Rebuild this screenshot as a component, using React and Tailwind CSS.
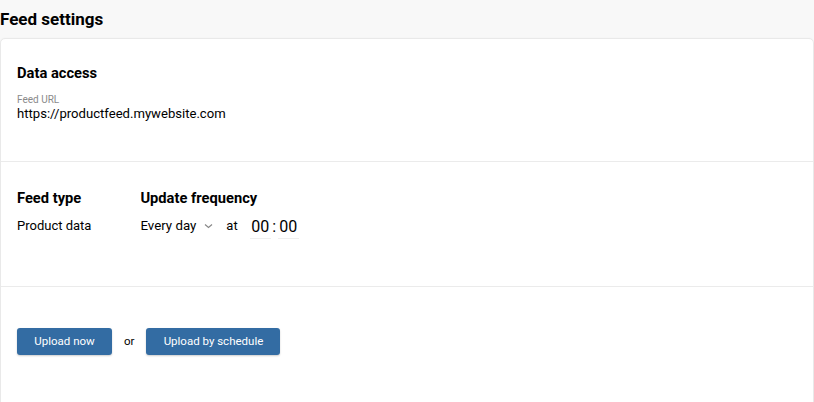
import React from 'react';

export default function App() {
  return (
    <div className="w-[814px] h-[402px] overflow-hidden bg-[#f8f8f8] font-['Roboto',sans-serif] text-[#1a1a1a]">
      {/* Page title */}
      <div className="h-[38px] flex items-center">
        <h1 className="text-[17px] font-bold leading-none text-black">Feed settings</h1>
      </div>

      {/* Settings card */}
      <div className="w-[814px] bg-white border border-[#e9e9e9] rounded-t-[5px] shadow-[0_0_2px_rgba(0,0,0,0.04)]">
        {/* Data access */}
        <div className="h-[123px] px-4 pt-[24px] border-b border-[#ebebeb]">
          <h2 className="text-[14.7px] font-bold leading-[20px] text-black">Data access</h2>
          <div className="mt-[11px] text-[10px] leading-[12px] text-[#8a8a8a]">Feed URL</div>
          <div className="text-[13.1px] leading-[16px] text-black">https://productfeed.mywebsite.com</div>
        </div>

        {/* Feed type + frequency */}
        <div className="h-[125px] px-4 pt-[26px] border-b border-[#ebebeb] flex gap-[49px]">
          <div>
            <h2 className="text-[14.7px] font-bold leading-[20px] text-black">Feed type</h2>
            <div className="mt-[10px] text-[13px] leading-[16px] text-black">Product data</div>
          </div>
          <div>
            <h2 className="text-[14.7px] font-bold leading-[20px] text-black">Update frequency</h2>
            <div className="mt-[10px] flex items-center h-[16px] text-[13px] leading-[16px] text-black">
              <span className="text-[13.3px]">Every day</span>
              <svg className="ml-[8px]" width="9" height="6" viewBox="0 0 9 6" fill="none">
                <path d="M1 1.5 L4.5 4.5 L8 1.5" stroke="#888" strokeWidth="1.2" />
              </svg>
              <span className="ml-[13px]">at</span>
              <span className="ml-[12px] flex items-center text-[16px] leading-[20px] mt-[3px]">
                <span className="w-[21px] text-center border-b border-[#eeeeee] pb-[1px]">00</span>
                <span className="w-[7px] text-center pb-[1px]">:</span>
                <span className="w-[21px] text-center border-b border-[#eeeeee] pb-[1px]">00</span>
              </span>
            </div>
          </div>
        </div>

        {/* Upload actions */}
        <div className="h-[130px] px-4 pt-[41px] flex items-start gap-[12px]">
          <button className="h-[27px] w-[95px] rounded-[3px] bg-[#336ca3] text-white text-[11.5px] shadow-[0_1px_2px_rgba(0,0,0,0.2)]">Upload now</button>
          <span className="text-[11.5px] leading-[27px] text-black">or</span>
          <button className="h-[27px] w-[134px] rounded-[3px] bg-[#336ca3] text-white text-[11.5px] shadow-[0_1px_2px_rgba(0,0,0,0.2)]">Upload by schedule</button>
        </div>
      </div>
    </div>
  );
}
